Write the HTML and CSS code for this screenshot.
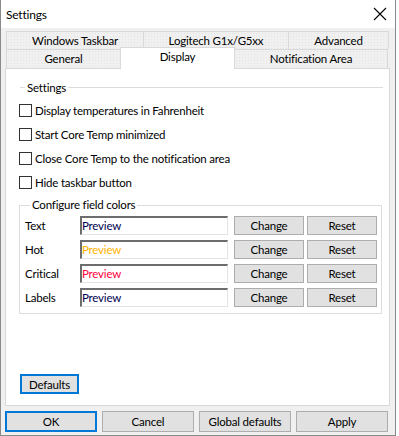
FILE: index.html
```html
<!DOCTYPE html>
<html lang="en">
<head>
    <meta charset="UTF-8">
    <meta name="viewport" content="width=device-width, initial-scale=1.0">
    <title>Settings</title>
    <link rel="stylesheet" href="styles.css">
</head>
<body>
    <div class="window">
        <div class="titlebar">
            <span class="title">Settings</span>
            <svg class="close" width="14" height="14" viewBox="0 0 14 14">
                <path d="M1 1 L13 13 M13 1 L1 13" stroke="#000" stroke-width="1.1" fill="none"/>
            </svg>
        </div>
        <div class="tabs">
            <div class="tab-row back">
                <div class="tab w137">Windows Taskbar</div>
                <div class="tab w145">Logitech G1x/G5xx</div>
                <div class="tab w100">Advanced</div>
            </div>
            <div class="tab-row front">
                <div class="tab w114">General</div>
                <div class="tab w114 selected">Display</div>
                <div class="tab w154">Notification Area</div>
            </div>
        </div>
        <div class="panel">
            <div class="group-header">
                <span class="line short"></span>
                <span class="group-title">Settings</span>
                <span class="line"></span>
            </div>
            <div class="checks">
                <label class="check"><span class="box"></span>Display temperatures in Fahrenheit</label>
                <label class="check"><span class="box"></span>Start Core Temp minimized</label>
                <label class="check"><span class="box"></span>Close Core Temp to the notification area</label>
                <label class="check"><span class="box"></span>Hide taskbar button</label>
            </div>
            <fieldset class="colors">
                <legend>Configure field colors</legend>
                <div class="color-row">
                    <span class="field-label">Text</span>
                    <div class="preview navy">Preview</div>
                    <button class="btn change">Change</button>
                    <button class="btn reset">Reset</button>
                </div>
                <div class="color-row">
                    <span class="field-label">Hot</span>
                    <div class="preview hot">Preview</div>
                    <button class="btn change">Change</button>
                    <button class="btn reset">Reset</button>
                </div>
                <div class="color-row">
                    <span class="field-label">Critical</span>
                    <div class="preview critical">Preview</div>
                    <button class="btn change">Change</button>
                    <button class="btn reset">Reset</button>
                </div>
                <div class="color-row">
                    <span class="field-label">Labels</span>
                    <div class="preview navy">Preview</div>
                    <button class="btn change">Change</button>
                    <button class="btn reset">Reset</button>
                </div>
            </fieldset>
            <button class="btn defaults focused">Defaults</button>
        </div>
        <div class="footer">
            <button class="btn wide focused">OK</button>
            <button class="btn wide">Cancel</button>
            <button class="btn wide">Global defaults</button>
            <button class="btn wide">Apply</button>
        </div>
    </div>
</body>
</html>
```

FILE: styles.css
```css
body {
    margin: 0;
    background: #ffffff;
    font-family: Lato, "Noto Sans", sans-serif;
    font-size: 11.5px;
    letter-spacing: -0.2px;
    color: #000;
}
.window {
    width: 396px;
    height: 436px;
    box-sizing: border-box;
    border: 1px solid #8a8a8a;
    border-top: none;
    background: #f0f0f0;
    display: flex;
    flex-direction: column;
}
.titlebar {
    height: 28px;
    background: #fff;
    display: flex;
    align-items: center;
    justify-content: space-between;
    padding: 0 8px 0 5px;
    font-size: 12px;
}
.close {
    display: block;
}
.tabs {
    margin: 3px 0 0 5px;
    display: flex;
    flex-direction: column;
}
.tab-row {
    display: flex;
}
.tab {
    box-sizing: border-box;
    height: 18px;
    border: 1px solid #d9d9d9;
    border-bottom: none;
    margin-right: -1px;
    background-color: #f0f0f0;
    background-image: radial-gradient(#e4e4e4 0.6px, transparent 0.8px);
    background-size: 3px 3px;
    display: flex;
    align-items: center;
    justify-content: center;
    line-height: 1;
}
.front .tab {
    height: 19px;
}
.tab.selected {
    background: #fff;
    height: 22px;
    margin-top: -2px;
    margin-bottom: -1px;
    position: relative;
    z-index: 1;
    align-items: flex-start;
    padding-top: 3px;
}
.w100 { width: 101px; }
.w114 { width: 115px; }
.w137 { width: 138px; }
.w145 { width: 146px; }
.w154 { width: 154px; }
.panel {
    margin-left: 4px;
    width: 385px;
    height: 338px;
    box-sizing: border-box;
    border: 1px solid #d9d9d9;
    background: #fff;
    display: flex;
    flex-direction: column;
    padding: 11px 6px 11px 13px;
}
.group-header {
    display: flex;
    align-items: center;
    height: 14px;
    margin-left: 1px;
}
.line {
    flex: 1;
    height: 1px;
    background: #dcdcdc;
}
.line.short {
    flex: none;
    width: 5px;
}
.group-title {
    padding: 0 2px;
}
.checks {
    margin-top: 4px;
    display: flex;
    flex-direction: column;
}
.check {
    height: 24px;
    display: flex;
    align-items: center;
}
.box {
    width: 13px;
    height: 13px;
    box-sizing: border-box;
    border: 1px solid #333;
    background: #fff;
    margin-right: 3px;
}
.colors {
    margin: 4px 4px 0 0;
    padding: 4px 4px 6px 5px;
    border: 1px solid #dcdcdc;
    display: flex;
    flex-direction: column;
    gap: 5px;
}
.colors legend {
    padding: 0 2px;
    margin-left: 5px;
    line-height: 14px;
}
.color-row {
    display: flex;
    align-items: center;
    height: 19px;
}
.field-label {
    width: 55px;
}
.preview {
    width: 148px;
    height: 19px;
    box-sizing: border-box;
    border: 1px solid #e3e3e3;
    border-top: 2px solid #6d6d6d;
    border-left: 2px solid #6d6d6d;
    background: #fff;
    line-height: 15px;
    padding-left: 0;
}
.navy { color: #000050; }
.hot { color: #ffb400; }
.critical { color: #ff0040; }
.btn {
    font-family: inherit;
    font-size: 11.5px;
    letter-spacing: -0.2px;
    color: #000;
    background: #e1e1e1;
    border: 1px solid #adadad;
    height: 19px;
    padding: 0;
    margin: 0;
}
.change {
    width: 70px;
    margin-left: 6px;
}
.reset {
    width: 70px;
    margin-left: 3px;
}
.focused {
    border: 2px solid #0078d7;
}
.defaults {
    margin-top: auto;
    margin-left: 1px;
    width: 59px;
    height: 20px;
    align-self: flex-start;
}
.footer {
    display: flex;
    gap: 5px;
    padding: 5px 0 0 4px;
}
.wide {
    width: 92px;
    height: 21px;
}
```
